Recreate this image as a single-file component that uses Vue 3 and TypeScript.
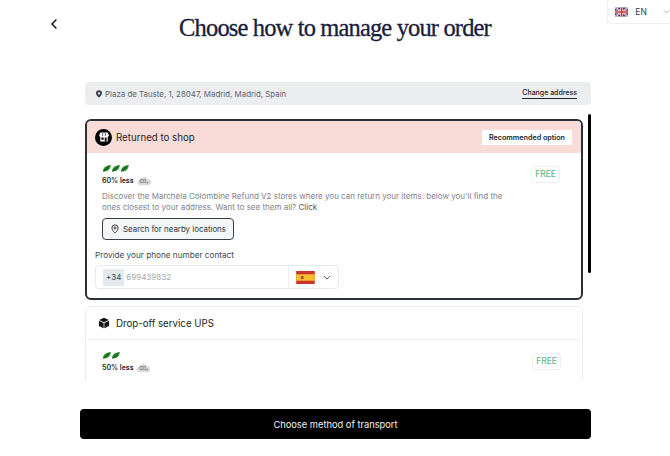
<template>
  <div class="page">
    <div class="lang">
      <svg class="flag-uk" viewBox="0 0 60 40" width="15" height="10">
        <rect width="60" height="40" fill="#2b3f87" />
        <path d="M0 0L60 40M60 0L0 40" stroke="#fff" stroke-width="8" />
        <path d="M0 0L60 40M60 0L0 40" stroke="#d0343f" stroke-width="3" />
        <path d="M30 0V40M0 20H60" stroke="#fff" stroke-width="12" />
        <path d="M30 0V40M0 20H60" stroke="#d0343f" stroke-width="7" />
      </svg>
      <span>EN</span>
      <svg class="lang-caret" viewBox="0 0 10 6" width="8" height="5"><path d="M1 1l4 4 4-4" /></svg>
    </div>

    <header class="top">
      <button class="back" title="Back">
        <svg viewBox="0 0 10 14" width="8" height="12"><path d="M8 1.500L2.500 7 8 12.500" /></svg>
      </button>
      <h1>Choose how to manage your order</h1>
    </header>

    <div class="address">
      <div class="address-text">
        <svg viewBox="0 0 24 24" width="8" height="8" class="pin"><path d="M12 1a9 9 0 00-9 9c0 6 9 13 9 13s9-7 9-13a9 9 0 00-9-9zm0 12.500a3.500 3.500 0 110-7 3.500 3.500 0 010 7z" /></svg>
        <span>{{ address }}</span>
      </div>
      <a class="change">Change address</a>
    </div>

    <div class="options-wrap">
      <div class="options">
        <section class="card selected">
          <div class="card-head">
            <span class="shop-icon">
              <svg viewBox="0 0 16 16" width="12" height="12">
                <path fill="#fff" d="M3 2h10l1.500 4a1.600 1.600 0 01-1.500 1.500v6.500H3V7.500A1.600 1.600 0 011.500 6z" />
                <path fill="#000" d="M4.500 8.500h3v3h-3zM9 8.500h2.500V14H9zM6 2.500h.8v4H6zM9.200 2.500h.8v4h-.8z" />
              </svg>
            </span>
            <span class="card-title">Returned to shop</span>
            <span class="recommended">Recommended option</span>
          </div>
          <div class="card-body">
            <div class="eco-row">
              <div>
                <div class="leaves">
                  <svg v-for="n in 3" :key="n" viewBox="0 0 10 8" width="9" height="7">
                    <path d="M1 8C1 3 4 .5 10 0 9.500 5 6 8 2.500 7L1 8z" />
                    <path class="vein" d="M2 7L8 1.500" />
                  </svg>
                </div>
                <div class="less">60% less
                  <span class="co2">
                    <svg viewBox="0 0 16 10" width="15" height="10"><path d="M4 9.500a3 3 0 01-.5-6A4.500 4.500 0 0111.500 3 3.300 3.300 0 0112.500 9.500z" /></svg>
                    <span class="co2-text">CO₂</span>
                  </span>
                </div>
              </div>
              <span class="free">FREE</span>
            </div>
            <p class="desc">Discover the Marchela Colombine Refund V2 stores where you can return your items: below you'll find the ones closest to your address. Want to see them all? <span class="click">Click</span></p>
            <button class="search">
              <svg viewBox="0 0 24 24" width="10" height="10"><path d="M12 2a7.500 7.500 0 00-7.500 7.500C4.500 15 12 22 12 22s7.500-7 7.500-12.500A7.500 7.500 0 0012 2z" /><circle cx="12" cy="9.500" r="2.500" /></svg>
              Search for nearby locations
            </button>
            <label class="phone-label">Provide your phone number contact</label>
            <div class="phone">
              <div class="phone-left">
                <span class="prefix">+34</span>
                <span class="number">699439832</span>
              </div>
              <div class="phone-right">
                <svg viewBox="0 0 20 14" width="19" height="13">
                  <rect width="20" height="14" fill="#c9342c" />
                  <rect y="3.500" width="20" height="7" fill="#f2bf2e" />
                  <rect x="5" y="5.500" width="3" height="3" fill="#b5482f" />
                </svg>
                <svg class="caret" viewBox="0 0 10 6" width="8" height="5"><path d="M1 1l4 4 4-4" /></svg>
              </div>
            </div>
          </div>
        </section>

        <section class="card tall">
          <div class="card-head plain">
            <svg class="box" viewBox="0 0 16 16" width="12" height="12">
              <path fill="#111" d="M8 1l6.500 3L8 7 1.500 4zM1.200 5l6.300 3v7l-6.300-3zM14.800 5L8.500 8v7l6.300-3z" />
            </svg>
            <span class="card-title">Drop-off service UPS</span>
          </div>
          <div class="card-body">
            <div class="eco-row">
              <div>
                <div class="leaves">
                  <svg v-for="n in 2" :key="n" viewBox="0 0 10 8" width="9" height="7">
                    <path d="M1 8C1 3 4 .5 10 0 9.500 5 6 8 2.500 7L1 8z" />
                    <path class="vein" d="M2 7L8 1.500" />
                  </svg>
                </div>
                <div class="less">50% less
                  <span class="co2">
                    <svg viewBox="0 0 16 10" width="15" height="10"><path d="M4 9.500a3 3 0 01-.5-6A4.500 4.500 0 0111.500 3 3.300 3.300 0 0112.500 9.500z" /></svg>
                    <span class="co2-text">CO₂</span>
                  </span>
                </div>
              </div>
              <span class="free">FREE</span>
            </div>
          </div>
        </section>
      </div>
      <div class="scrollbar"></div>
    </div>

    <button class="submit">Choose method of transport</button>
  </div>
</template>

<script setup lang="ts">
const address = "Plaza de Tauste, 1, 28047, Madrid, Madrid, Spain";
</script>

<style>
html,
body {
  margin: 0;
  background: #fff;
}
</style>

<style scoped>
.page {
  position: relative;
  width: 670px;
  height: 456px;
  overflow: hidden;
  font-family: "Inter", "Noto Sans", sans-serif;
  color: #1c2230;
  display: flex;
  flex-direction: column;
}

.lang {
  position: absolute;
  top: 0;
  right: 0;
  width: 63px;
  height: 24px;
  box-sizing: border-box;
  padding-left: 7px;
  display: flex;
  align-items: center;
  gap: 7px;
  background: #fff;
  border: 1px solid #eef0f3;
  border-top: none;
  border-right: none;
  border-radius: 0 0 0 4px;
  font-size: 8.500px;
  color: #333a45;
}

.lang-caret {
  margin-left: 9px;
  fill: none;
  stroke: #9aa1ab;
  stroke-width: 1;
}

.top {
  position: relative;
  height: 82px;
  display: flex;
  justify-content: center;
  padding-top: 13px;
  box-sizing: border-box;
}

.back {
  position: absolute;
  left: 50px;
  top: 18px;
  padding: 0;
  border: none;
  background: none;
  display: flex;
}

.back svg {
  fill: none;
  stroke: #111;
  stroke-width: 1.800;
}

h1 {
  margin: 0;
  font-family: "Liberation Serif", serif;
  font-weight: 400;
  font-size: 24.500px;
  letter-spacing: -0.850px;
  line-height: 30px;
  color: #17203a;
  -webkit-text-stroke: 0.300px #17203a;
}

.address {
  margin-left: 85px;
  width: 506px;
  height: 23px;
  box-sizing: border-box;
  padding: 0 14px 0 10px;
  background: #ecedef;
  border-radius: 4px;
  display: flex;
  align-items: center;
  justify-content: space-between;
  font-size: 7.900px;
}

.address-text {
  display: flex;
  align-items: center;
  gap: 2px;
  color: #5d6470;
}

.pin {
  fill: #3a404b;
}

.change {
  color: #222;
  font-size: 7px;
  font-weight: 500;
  border-bottom: 1px solid #222;
  line-height: 10px;
}

.options-wrap {
  position: relative;
  margin: 14px 0 0 85px;
  width: 506px;
  height: 261px;
}

.options {
  width: 498px;
  height: 100%;
  overflow: hidden;
  display: flex;
  flex-direction: column;
  gap: 6px;
}

.scrollbar {
  position: absolute;
  right: 0;
  top: -5px;
  width: 3px;
  height: 159px;
  background: #000;
  border-radius: 2px;
}

.card {
  flex: none;
  border: 1px solid #e9ebef;
  border-radius: 6px;
  overflow: hidden;
  background: #fff;
}

.card.tall {
  height: 120px;
}

.card.tall .card-body {
  padding-left: 16px;
}

.card.selected {
  border: 2px solid #2b2f3a;
  height: 181px;
  box-sizing: border-box;
}

.card-head {
  height: 32px;
  display: flex;
  align-items: center;
  padding: 0 9px 0 8px;
  background: #f9dcd7;
}

.card-head.plain {
  background: #fff;
  height: 32px;
  border-bottom: 1px solid #eef0f3;
  padding-left: 12px;
}

.shop-icon {
  width: 17px;
  height: 17px;
  border-radius: 50%;
  background: #000;
  display: flex;
  align-items: center;
  justify-content: center;
}

.card-title {
  margin-left: 4px;
  font-size: 9.700px;
  color: #20242c;
}

.plain .card-title {
  margin-left: 6px;
}

.recommended {
  margin-left: auto;
  background: #fff;
  padding: 0 7px;
  height: 15px;
  line-height: 15px;
  font-size: 7.200px;
  font-weight: 600;
  color: #20242c;
}

.card-body {
  padding: 12px 21px 0 15px;
}

.eco-row {
  display: flex;
  justify-content: space-between;
  align-items: flex-start;
}

.leaves {
  display: flex;
  gap: 0;
  height: 8px;
}

.leaves svg {
  fill: #2f8f2f;
}

.vein {
  fill: none;
  stroke: #14501c;
  stroke-width: 1.200;
}

.less {
  margin-top: 3px;
  font-size: 7px;
  font-weight: 600;
  color: #20242c;
  display: flex;
  align-items: center;
  gap: 3px;
  height: 9px;
}

.co2 {
  position: relative;
  display: inline-flex;
  width: 15px;
  height: 10px;
}

.co2 svg {
  fill: #d9d9dc;
}

.co2-text {
  position: absolute;
  left: 3px;
  top: 2px;
  font-size: 4.500px;
  line-height: 7px;
  font-weight: 500;
  color: #444;
}

.free {
  margin-top: 1px;
  padding: 0 3px;
  height: 15px;
  line-height: 15px;
  border: 1px solid #eef0f3;
  border-radius: 3px;
  font-size: 8.500px;
  font-weight: 500;
  color: #5fb88a;
}

.desc {
  margin: 6px 0 0;
  width: 402px;
  font-size: 8px;
  line-height: 11px;
  color: #7d838d;
}

.click {
  color: #4d5563;
}

.search {
  margin-top: 5px;
  width: 132px;
  height: 22px;
  display: flex;
  align-items: center;
  justify-content: center;
  gap: 3px;
  padding: 0;
  background: #f5f6f7;
  border: 1px solid #3a3f48;
  border-radius: 4px;
  font-family: inherit;
  font-size: 7.900px;
  color: #2d323b;
}

.search svg {
  fill: none;
  stroke: #222;
  stroke-width: 2;
}

.phone-label {
  display: block;
  margin: 10px 0 0 -7px;
  font-size: 8.200px;
  line-height: 11px;
  color: #3f4550;
}

.phone {
  margin: 4px 0 0 -7px;
  width: 244px;
  height: 24px;
  box-sizing: border-box;
  display: flex;
  border: 1px solid #e6e8ee;
  border-radius: 4px;
}

.phone-left {
  flex: 1;
  display: flex;
  align-items: center;
  gap: 2px;
  padding-left: 7px;
}

.prefix {
  background: #e4e9f0;
  padding: 0 3px;
  height: 17px;
  line-height: 17px;
  font-size: 8px;
  color: #3a404b;
}

.number {
  font-size: 8px;
  color: #a4a9b1;
}

.phone-right {
  width: 50px;
  box-sizing: border-box;
  border-left: 1px solid #eceef2;
  display: flex;
  align-items: center;
  padding-left: 7px;
  gap: 8px;
}

.caret {
  fill: none;
  stroke: #555;
  stroke-width: 1.200;
}

.submit {
  margin: 29px 0 0 80px;
  width: 511px;
  height: 30px;
  background: #000;
  border: none;
  border-radius: 4px;
  color: #f2f2f2;
  font-family: inherit;
  font-size: 9.300px;
}
</style>
